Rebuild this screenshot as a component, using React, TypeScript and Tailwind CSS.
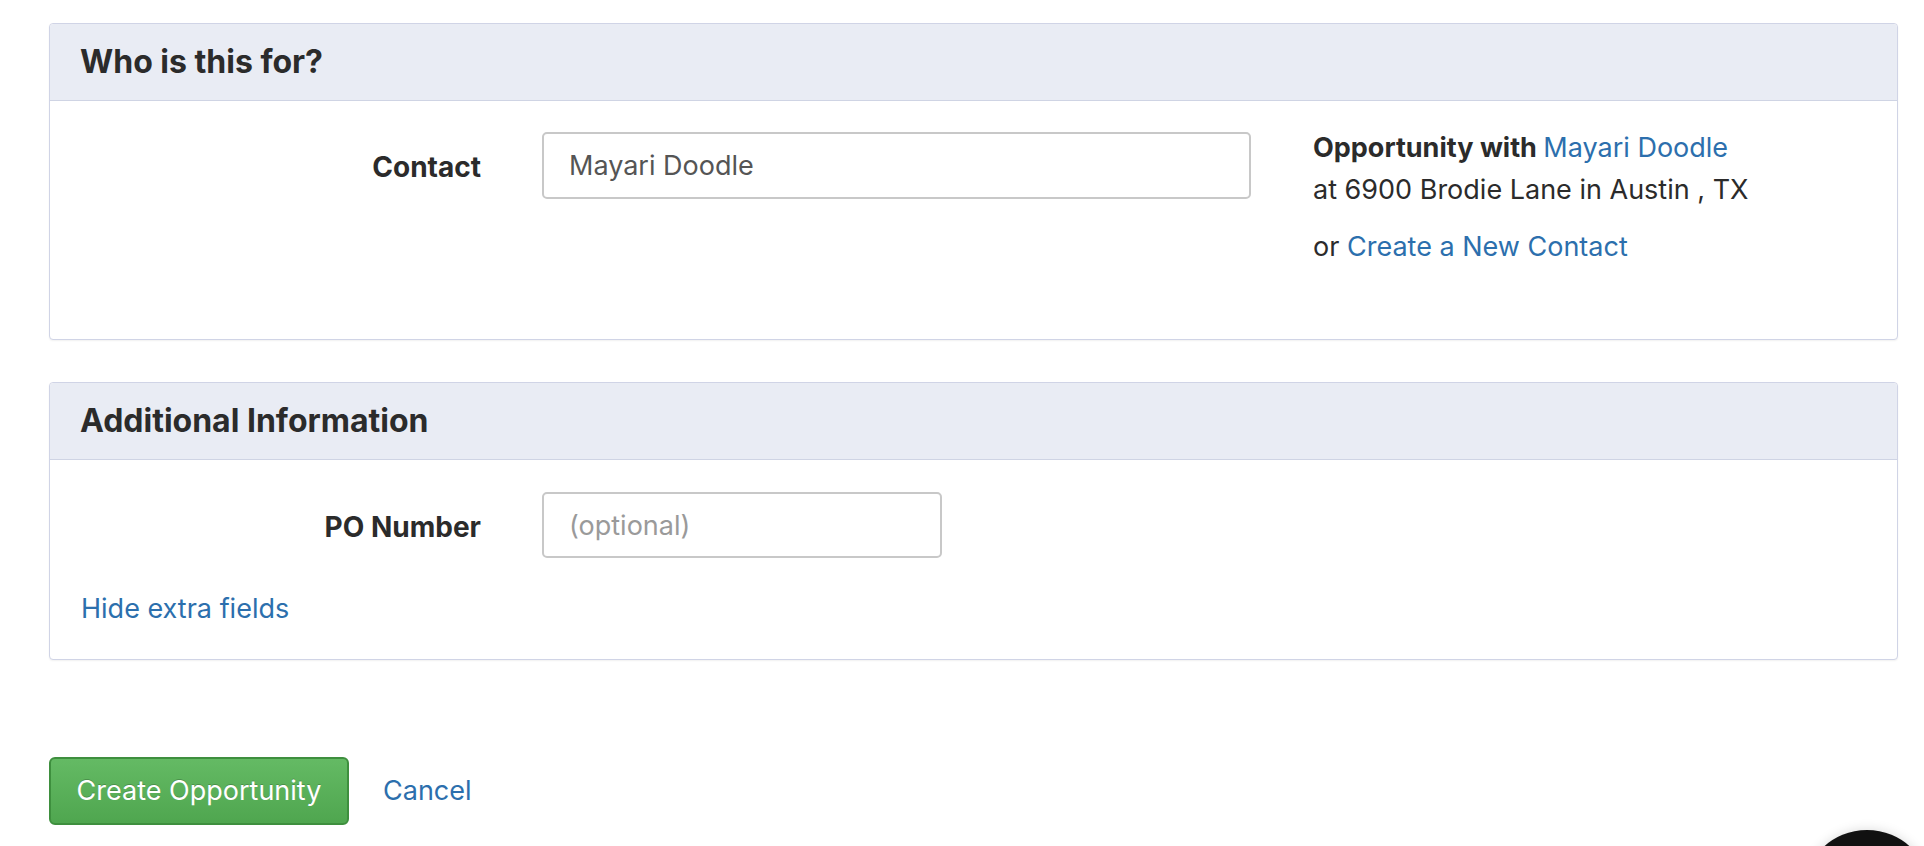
import React from 'react';

const font = { fontFamily: 'Inter, "Noto Sans", sans-serif' };

function PanelHeader({ title }: { title: string }) {
  return (
    <div className="h-[77px] flex items-center px-[30px] bg-[#e9ecf4] border-b border-[#cfd4e4] rounded-t-[4px]">
      <h3 className="text-[32px] font-bold text-[#2b2b2b]">{title}</h3>
    </div>
  );
}

export default function App() {
  return (
    <div className="relative h-[846px] overflow-hidden bg-white text-[#333]" style={font}>
      <div className="pt-[23px] pl-[49px] pr-[26px]">
        {/* Who is this for */}
        <div className="border border-[#d0d4e6] rounded-[4px] shadow-[0_1px_2px_rgba(0,0,0,0.06)] bg-white">
          <PanelHeader title="Who is this for?" />
          <div className="flex items-start pt-[26px] pb-[71px]">
            <div className="w-[431px] h-[67px] mt-[5px] pt-[3px] flex items-center justify-end">
              <label className="text-[28px] font-bold text-[#2b2b2b]">Contact</label>
            </div>
            <input
              className="ml-[61px] mt-[5px] w-[709px] h-[67px] px-[25px] border-2 border-[#c8c8c8] rounded-[5px] text-[27px] text-[#555] outline-none"
              defaultValue="Mayari Doodle"
            />
            <div className="ml-[62px] text-[27px] leading-[42px] text-[#2b2b2b]">
              <div>
                <span className="font-bold">Opportunity with </span>
                <a className="text-[#2c6fad]" href="#">Mayari Doodle</a>
              </div>
              <div>at 6900 Brodie Lane in Austin , TX</div>
              <div className="mt-[15px]">
                or <a className="text-[#2c6fad]" href="#">Create a New Contact</a>
              </div>
            </div>
          </div>
        </div>

        {/* Additional Information */}
        <div className="mt-[42px] border border-[#d0d4e6] rounded-[4px] shadow-[0_1px_2px_rgba(0,0,0,0.06)] bg-white">
          <PanelHeader title="Additional Information" />
          <div className="pt-[32px] pb-[29px]">
            <div className="flex items-center">
              <div className="w-[431px] pt-[3px] flex justify-end">
                <label className="text-[28px] font-bold text-[#2b2b2b]">PO Number</label>
              </div>
              <input
                className="ml-[61px] w-[400px] h-[66px] px-[25px] border-2 border-[#c8c8c8] rounded-[5px] text-[27px] text-[#555] placeholder:text-[#9a9a9a] outline-none"
                placeholder="(optional)"
              />
            </div>
            <div className="mt-[30px] px-[31px] text-[27px] leading-[42px]">
              <a className="text-[#2c6fad]" href="#">Hide extra fields</a>
            </div>
          </div>
        </div>

        {/* Actions */}
        <div className="mt-[97px] flex items-center text-[27px]">
          <button className="w-[300px] h-[68px] rounded-[6px] border-2 border-[#3e8f3e] bg-gradient-to-b from-[#64ba64] to-[#4fa64f] text-white [text-shadow:0_-1px_0_rgba(0,0,0,0.2)]">
            Create Opportunity
          </button>
          <a className="ml-[34px] text-[#2c6fad]" href="#">Cancel</a>
        </div>
      </div>

      {/* chat widget */}
      <div className="absolute left-[1803px] top-[830px] w-[128px] h-[128px] rounded-full bg-[#111] shadow-[0_0_12px_rgba(0,0,0,0.15)]" />
    </div>
  );
}
